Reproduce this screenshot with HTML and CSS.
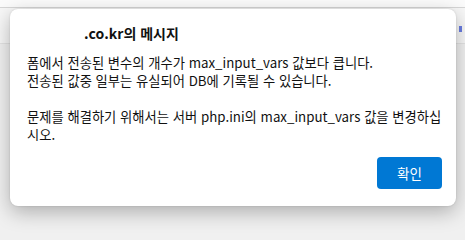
FILE: index.html
```html
<!DOCTYPE html>
<html lang="ko">
<head>
<meta charset="utf-8">
<link rel="stylesheet" href="styles.css">
</head>
<body>
<div class="topbar"></div>
<div class="toolbar"><span class="blue-mark"></span></div>
<div class="page"></div>
<div class="dialog" role="alertdialog">
  <div class="title">.co.kr의 메시지</div>
  <div class="message">폼에서 전송된 변수의 개수가 max_input_vars 값보다 큽니다.
전송된 값중 일부는 유실되어 DB에 기록될 수 있습니다.

문제를 해결하기 위해서는 서버 php.ini의 max_input_vars 값을 변경하십시오.</div>
  <div class="footer"><button class="ok">확인</button></div>
</div>
</body>
</html>
```
FILE: styles.css
```css
html, body {
  margin: 0;
  padding: 0;
}
body {
  width: 465px;
  height: 237px;
  overflow: hidden;
  background: #f0f0f0;
  font-family: "Noto Sans CJK KR", sans-serif;
  position: relative;
}
.topbar {
  height: 7px;
  background: #fbfbfb;
  border-bottom: 1px solid #d6d6d6;
}
.toolbar {
  height: 35px;
  background: #f7f7f7;
  border-bottom: 1px solid #e3e3e3;
  display: flex;
  justify-content: flex-end;
  align-items: flex-start;
  padding-right: 3px;
}
.blue-mark {
  width: 3px;
  height: 6px;
  margin-top: 18px;
  background: #6a7de0;
}
.dialog {
  position: absolute;
  left: 10px;
  top: 9px;
  width: 446px;
  height: 197px;
  box-sizing: border-box;
  background: #fff;
  border-radius: 8px;
  box-shadow: 0 6px 20px rgba(0, 0, 0, 0.28), 0 0 2px rgba(0, 0, 0, 0.15);
  padding: 14px 14px 17px 17px;
  display: flex;
  flex-direction: column;
}
.title {
  font-size: 14px;
  font-weight: 700;
  line-height: 20px;
  color: #111;
  padding-left: 57px;
}
.message {
  margin-top: 11px;
  margin-right: -8px;
  font-size: 13.3px;
  line-height: 18px;
  color: #111;
  white-space: pre-line;
}
.footer {
  margin-top: auto;
  display: flex;
  justify-content: flex-end;
}
.ok {
  width: 65px;
  height: 32px;
  border: none;
  border-radius: 4px;
  background: #0078d4;
  color: #fff;
  font-family: "Noto Sans CJK KR", sans-serif;
  font-size: 13.5px;
  padding: 0;
}
```
